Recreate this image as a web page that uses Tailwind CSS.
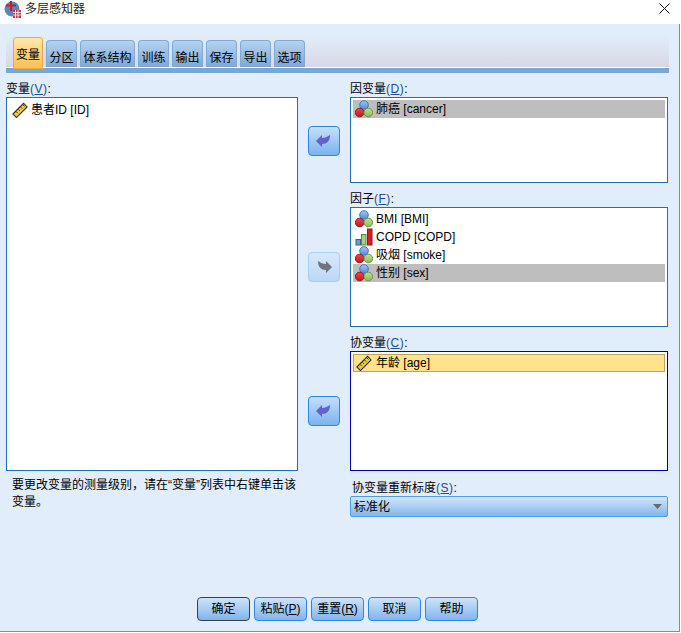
<!DOCTYPE html>
<html lang="zh">
<head>
<meta charset="UTF-8">
<title>多层感知器</title>
<script src="https://cdn.jsdelivr.net/npm/@tailwindcss/browser@4"></script>
</head>
<body class="w-[681px] h-[633px] overflow-hidden bg-white font-['Liberation_Sans','Noto_Sans_CJK_SC',sans-serif] text-[12px] leading-[14px] text-black">
<!-- icon sprite, not display:none or the gradients drop out -->
<svg class="absolute w-0 h-0">
  <defs>
    <linearGradient id="b" x1="0" y1="0" x2="0" y2="1"><stop offset="0" stop-color="#a3c9f2"/><stop offset="1" stop-color="#4f8ad6"/></linearGradient>
    <linearGradient id="r" x1="0" y1="0" x2="0" y2="1"><stop offset="0" stop-color="#ee4a50"/><stop offset="1" stop-color="#c01420"/></linearGradient>
    <linearGradient id="g" x1="0" y1="0" x2="0" y2="1"><stop offset="0" stop-color="#c4e09a"/><stop offset="1" stop-color="#86bb56"/></linearGradient>
  </defs>
  <symbol id="nominal" viewBox="0 0 18 18">
    <circle cx="9" cy="5" r="4.300" fill="url(#b)" stroke="#3c76c0"/>
    <circle cx="4.700" cy="12.500" r="4.300" fill="url(#r)" stroke="#a01018"/>
    <circle cx="13.300" cy="12.500" r="4.300" fill="url(#g)" stroke="#659a3c"/>
  </symbol>
  <symbol id="scale" viewBox="0 0 18 18">
    <path d="M1 13.500 13 1.500l4 4L5 17.500z" fill="#f2c93a" stroke="#2d2d2d" stroke-width="1.200"/>
    <path d="M4.500 10.500l2 2M7 8l2 2M9.500 5.500l2 2M12 3l2 2" stroke="#2d2d2d" fill="none"/>
  </symbol>
  <symbol id="ordinal" viewBox="0 0 18 18">
    <rect x="1" y="11.500" width="4.500" height="5.500" fill="#6d9ccf" stroke="#3d5f85"/>
    <rect x="6.500" y="6.500" width="4.500" height="10.500" fill="#a6ce84" stroke="#5f8545"/>
    <rect x="12.500" y="1" width="4.500" height="16" fill="#dc1f24" stroke="#9c1418"/>
  </symbol>
</svg>

<!-- Title bar -->
<div class="h-[24px] flex items-start pt-[2px] bg-white">
  <svg class="ml-[4px] -mt-[1px] w-[18px] h-[18px]" viewBox="0 0 18 18">
    <circle cx="8" cy="8" r="7.500" fill="#5a87b8"/>
    <rect x="9" y="9" width="8" height="8" fill="#c9344a"/>
    <path d="M9 11.500h8M9 14h8M11.500 9v8M14 9v8" stroke="#fff" stroke-width=".8"/>
    <path d="M7 0v10M2 4.500h10" stroke="#d4142a" stroke-width="2"/>
  </svg>
  <span class="ml-[3px] text-[#222]">多层感知器</span>
  <svg class="ml-auto mr-[11px] mt-[1px] w-[11px] h-[11px]" viewBox="0 0 11 11"><path d="M.5.5l10 10M10.500.5l-10 10" stroke="#111" fill="none"/></svg>
</div>

<!-- Dialog body -->
<div class="h-[608px] w-[680px] bg-[#e1edfb] border-b border-r border-[#8c8c8c] flex flex-col">
  <!-- Tabs -->
  <div class="mt-[11px] mx-[6px] w-[663px] h-[39px] flex flex-col">
    <div class="h-[33px] bg-gradient-to-b from-[#e1edfb] to-[#d8d8e4] flex items-end pl-[7px] gap-[3px] border-b border-white">
      <div class="relative z-10 -mb-[2px] h-[32px] w-[30px] pt-[3px] rounded-t-[3px] border border-[#e8ac3e] bg-gradient-to-b from-[#ffe9a6] to-[#ffbf52] flex items-center justify-center">变量</div>
      <div class="h-[27px] w-[31px] pt-[7px] rounded-t-[4px] border border-[#7eabd6] border-b-0 bg-gradient-to-b from-[#b5d3f2] to-[#7ea7d2] flex items-center justify-center">分区</div>
      <div class="h-[27px] w-[55px] pt-[7px] rounded-t-[4px] border border-[#7eabd6] border-b-0 bg-gradient-to-b from-[#b5d3f2] to-[#7ea7d2] flex items-center justify-center">体系结构</div>
      <div class="h-[27px] w-[31px] pt-[7px] rounded-t-[4px] border border-[#7eabd6] border-b-0 bg-gradient-to-b from-[#b5d3f2] to-[#7ea7d2] flex items-center justify-center">训练</div>
      <div class="h-[27px] w-[31px] pt-[7px] rounded-t-[4px] border border-[#7eabd6] border-b-0 bg-gradient-to-b from-[#b5d3f2] to-[#7ea7d2] flex items-center justify-center">输出</div>
      <div class="h-[27px] w-[31px] pt-[7px] rounded-t-[4px] border border-[#7eabd6] border-b-0 bg-gradient-to-b from-[#b5d3f2] to-[#7ea7d2] flex items-center justify-center">保存</div>
      <div class="h-[27px] w-[31px] pt-[7px] rounded-t-[4px] border border-[#7eabd6] border-b-0 bg-gradient-to-b from-[#b5d3f2] to-[#7ea7d2] flex items-center justify-center">导出</div>
      <div class="h-[27px] w-[31px] pt-[7px] rounded-t-[4px] border border-[#7eabd6] border-b-0 bg-gradient-to-b from-[#b5d3f2] to-[#7ea7d2] flex items-center justify-center">选项</div>
    </div>
    <div class="h-[5px] bg-[#78a8d4]"></div>
  </div>

  <!-- Main -->
  <div class="flex mt-[8px] ml-[6px]">
    <div class="w-[292px] shrink-0">
      <div class="h-[14px] mb-[1px]">变量<span class="text-[#1c4f94] tracking-[.5px]">(<span class="underline">V</span>)</span>:</div>
      <div class="h-[374px] bg-white border border-[#1f6fc0] pt-[3px] pl-[5px]">
        <div class="flex items-center h-[18px]"><svg class="w-[16px] h-[16px]"><use href="#scale"/></svg><span class="ml-[3px]">患者ID [ID]</span></div>
      </div>
      <p class="mt-[6px] ml-[6px] w-[288px] leading-[17px]">要更改变量的测量级别，请在“变量”列表中右键单击该变量。</p>
    </div>

    <div class="ml-[10px] flex flex-col">
      <!-- Dependent -->
      <div class="flex">
        <div class="w-[42px] pt-[44px]">
          <div class="w-[32px] h-[30px] rounded-[4px] border border-[#2f86dc] bg-gradient-to-b from-[#c4dffa] to-[#7ab3ee] flex items-center justify-center">
            <svg class="w-[16px] h-[14px]" viewBox="0 0 16 14"><path d="M0 7 6 1v3c3 0 5-1 8-3 0 6-3 9-8 9v3z" fill="#6460cc"/></svg>
          </div>
        </div>
        <div class="w-[318px]">
          <div class="h-[14px] mb-[1px]">因变量<span class="text-[#1c4f94] tracking-[.5px]">(<span class="underline">D</span>)</span>:</div>
          <div class="h-[86px] bg-white border border-[#1f6fc0] p-[2px]">
            <div class="flex items-center h-[18px] bg-[#bebebe] pl-[2px]"><svg class="w-[18px] h-[18px]"><use href="#nominal"/></svg><span class="ml-[3px]">肺癌 [cancer]</span></div>
          </div>
        </div>
      </div>
      <!-- Factors -->
      <div class="flex mt-[9px]">
        <div class="w-[42px] pt-[60px]">
          <div class="w-[32px] h-[30px] rounded-[4px] border border-[#a8cdf0] bg-gradient-to-b from-[#d8e8fa] to-[#bcd7f4] flex items-center justify-center">
            <svg class="w-[16px] h-[14px]" viewBox="0 0 16 14"><path d="M16 7 10 1v3C7 4 5 3 2 1c0 6 3 9 8 9v3z" fill="#6e7480"/></svg>
          </div>
        </div>
        <div class="w-[318px]">
          <div class="h-[14px] mb-[1px]">因子<span class="text-[#1c4f94] tracking-[.5px]">(<span class="underline">F</span>)</span>:</div>
          <div class="h-[120px] bg-white border border-[#1f6fc0] p-[2px]">
            <div class="flex items-center h-[18px] pl-[2px]"><svg class="w-[18px] h-[18px]"><use href="#nominal"/></svg><span class="ml-[3px]">BMI [BMI]</span></div>
            <div class="flex items-center h-[18px] pl-[2px]"><svg class="w-[18px] h-[18px]"><use href="#ordinal"/></svg><span class="ml-[3px]">COPD [COPD]</span></div>
            <div class="flex items-center h-[18px] pl-[2px]"><svg class="w-[18px] h-[18px]"><use href="#nominal"/></svg><span class="ml-[3px]">吸烟 [smoke]</span></div>
            <div class="flex items-center h-[18px] bg-[#bebebe] pl-[2px]"><svg class="w-[18px] h-[18px]"><use href="#nominal"/></svg><span class="ml-[3px]">性别 [sex]</span></div>
          </div>
        </div>
      </div>
      <!-- Covariates -->
      <div class="flex mt-[9px]">
        <div class="w-[42px] pt-[60px]">
          <div class="w-[32px] h-[30px] rounded-[4px] border border-[#2f86dc] bg-gradient-to-b from-[#c4dffa] to-[#7ab3ee] flex items-center justify-center">
            <svg class="w-[16px] h-[14px]" viewBox="0 0 16 14"><path d="M0 7 6 1v3c3 0 5-1 8-3 0 6-3 9-8 9v3z" fill="#6460cc"/></svg>
          </div>
        </div>
        <div class="w-[318px]">
          <div class="h-[14px] mb-[1px]">协变量<span class="text-[#1c4f94] tracking-[.5px]">(<span class="underline">C</span>)</span>:</div>
          <div class="h-[120px] bg-white border border-[#0000b4] p-[2px]">
            <div class="flex items-center h-[18px] bg-[#ffe28a] border border-[#b8a45c] pl-[1px]"><svg class="w-[18px] h-[16px]"><use href="#scale"/></svg><span class="ml-[3px]">年龄 [age]</span></div>
          </div>
          <div class="mt-[10px] ml-[2px] h-[14px]">协变量重新标度<span class="text-[#1c4f94] tracking-[.5px]">(<span class="underline">S</span>)</span>:</div>
          <div class="mt-[1px] h-[21px] rounded-[2px] border border-[#4a9ee8] bg-gradient-to-b from-[#d3e6fa] to-[#7fb6ee] flex items-center pl-[3px] pr-[5px]">
            <span>标准化</span>
            <svg class="ml-auto w-[9px] h-[5px]" viewBox="0 0 9 5"><path d="M0 0h9L4.500 5z" fill="#6a6a6a"/></svg>
          </div>
        </div>
      </div>
    </div>
  </div>

  <!-- Footer buttons -->
  <div class="mt-auto mb-[10px] pl-[197px] flex gap-[4px]">
    <div class="w-[53px] h-[24px] rounded-[4px] border border-[#3a3f48] bg-gradient-to-b from-[#cfe3f9] to-[#7fb5ec] flex items-center justify-center">确定</div>
    <div class="w-[53px] h-[24px] rounded-[4px] border border-[#2f86dc] bg-gradient-to-b from-[#cfe3f9] to-[#7fb5ec] flex items-center justify-center"><span>粘贴(<span class="underline">P</span>)</span></div>
    <div class="w-[53px] h-[24px] rounded-[4px] border border-[#2f86dc] bg-gradient-to-b from-[#cfe3f9] to-[#7fb5ec] flex items-center justify-center"><span>重置(<span class="underline">R</span>)</span></div>
    <div class="w-[53px] h-[24px] rounded-[4px] border border-[#2f86dc] bg-gradient-to-b from-[#cfe3f9] to-[#7fb5ec] flex items-center justify-center">取消</div>
    <div class="w-[53px] h-[24px] rounded-[4px] border border-[#2f86dc] bg-gradient-to-b from-[#cfe3f9] to-[#7fb5ec] flex items-center justify-center">帮助</div>
  </div>
</div>
</body>
</html>
